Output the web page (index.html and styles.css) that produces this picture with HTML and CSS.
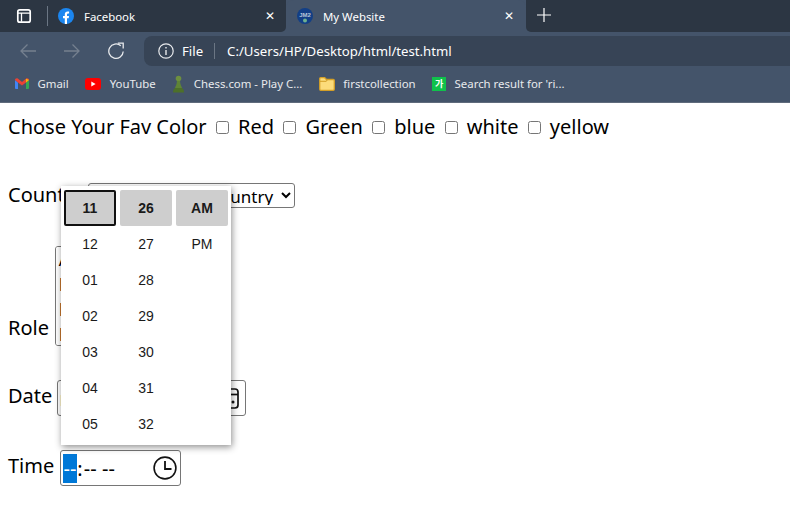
FILE: index.html
```html
<!DOCTYPE html>
<html lang="en">
<head>
    <meta charset="UTF-8">
    <meta name="viewport" content="width=device-width, initial-scale=1.0">
    <title>My Website</title>
    <link rel="stylesheet" href="styles.css">
</head>
<body>

<header class="browser">
    <div class="tabs">
        <div class="tabs-left">
            <svg class="side-icon" width="16" height="16" viewBox="0 0 16 16"><rect x="1.800" y="1.800" width="12.400" height="12.400" rx="2" fill="none" stroke="#fff" stroke-width="1.700"/><path d="M2 5.200h12M5.500 5.200v8.500" stroke="#fff" stroke-width="1.300" fill="none"/></svg>
            <span class="tab-sep"></span>
            <div class="tab tab-fb">
                <svg width="16" height="16" viewBox="0 0 16 16"><circle cx="8" cy="8" r="8" fill="#1b86f0"/><path d="M6.800 16V10.300H5V8h1.800V6.300C6.800 4.400 7.900 3.400 9.600 3.400c.8 0 1.500.1 1.500.1v1.900h-.9c-.9 0-1.200.6-1.200 1.200V8h2l-.3 2.300H9V16z" fill="#fff"/></svg>
                <span class="tab-title">Facebook</span>
                <span class="tab-close">&#10005;</span>
            </div>
        </div>
        <div class="tab tab-active">
            <svg width="16" height="16" viewBox="0 0 16 16"><circle cx="8" cy="8" r="8" fill="#123f86"/><text x="8" y="8.500" text-anchor="middle" class="jm-text">JM2</text><circle cx="8" cy="12.500" r="2" fill="#6fb08f"/></svg>
            <span class="tab-title">My Website</span>
            <span class="tab-close">&#10005;</span>
        </div>
        <div class="tabs-right">
            <svg width="14" height="14" viewBox="0 0 14 14"><path d="M7 0v14M0 7h14" stroke="#fff" stroke-width="1.200"/></svg>
        </div>
    </div>

    <div class="toolbar">
        <div class="nav-btns">
            <svg width="16" height="16" viewBox="0 0 16 16"><path d="M16 8H1M7.500 1.500 1 8l6.500 6.500" fill="none" stroke="#75808f" stroke-width="1.300"/></svg>
            <svg width="16" height="16" viewBox="0 0 16 16"><path d="M0 8h15M8.500 1.500 15 8l-6.500 6.500" fill="none" stroke="#75808f" stroke-width="1.300"/></svg>
            <svg width="16" height="18" viewBox="0 0 16 18"><path d="M15.200 9.500A7.200 7.200 0 1 1 12.800 3.800" fill="none" stroke="#e8eaed" stroke-width="1.300"/><path d="M9.800 1.200h5.400v5.300" fill="none" stroke="#e8eaed" stroke-width="1.300"/></svg>
        </div>
        <div class="omnibox">
            <svg width="16" height="16" viewBox="0 0 16 16"><circle cx="8" cy="8" r="7.200" fill="none" stroke="#e8eaed" stroke-width="1.200"/><path d="M8 7v5M8 4v1.600" stroke="#e8eaed" stroke-width="1.400"/></svg>
            <span class="omni-file">File</span>
            <span class="omni-sep"></span>
            <span class="omni-url">C:/Users/HP/Desktop/html/test.html</span>
        </div>
    </div>

    <nav class="bookmarks">
        <a class="bm">
            <svg width="14" height="11" viewBox="0 0 14 11"><path d="M0 2v8a1 1 0 0 0 1 1h2V4.500z" fill="#4285f4"/><path d="M14 2v8a1 1 0 0 1-1 1h-2V4.500z" fill="#34a853"/><path d="M0 2C0 .5 1.500-.4 2.800.5L7 4l4.200-3.500C12.500-.4 14 .5 14 2l-3 2.500L7 7.600 3 4.500z" fill="#ea4335"/><path d="M11 .7l3 1.300-3 2.500z" fill="#fbbc04"/></svg>
            Gmail
        </a>
        <a class="bm">
            <svg width="16" height="12" viewBox="0 0 16 12"><rect width="16" height="12" rx="3" fill="#f00"/><path d="M6.300 3.500v5L10.600 6z" fill="#fff"/></svg>
            YouTube
        </a>
        <a class="bm">
            <svg width="13" height="18" viewBox="0 0 12 18"><circle cx="6" cy="3.500" r="2.800" fill="#6d8f3f"/><path d="M4.500 6h3c0 3 1.500 5 2 7H2.500c.5-2 2-4 2-7z" fill="#5f8436"/><path d="M.5 17.500c0-2.500 1-3.800 2-4.500h7c1 .7 2 2 2 4.500z" fill="#4d7029"/></svg>
            Chess.com - Play C...
        </a>
        <a class="bm">
            <svg width="16" height="14" viewBox="0 0 16 14"><path d="M.7 12V1.700C.7 1 1.100.7 1.700.7h4L7.500 2.500h6.800c.6 0 1 .4 1 1V12c0 .7-.4 1.300-1 1.300H1.700c-.6 0-1-.6-1-1.300z" fill="#fcdc7b" stroke="#d39f27" stroke-width="1.300"/><path d="M1 4.300h6.300l1-1.500" fill="none" stroke="#d39f27"/></svg>
            firstcollection
        </a>
        <a class="bm">
            <span class="bm-green">가</span>
            Search result for 'ri...
        </a>
    </nav>
</header>

<main class="page">
    <p class="row">
        Chose Your Fav Color
        <input class="check" type="checkbox"> Red
        <input class="check" type="checkbox"> Green
        <input class="check" type="checkbox"> blue
        <input class="check" type="checkbox"> white
        <input class="check" type="checkbox"> yellow
    </p>
    <p class="row row-country">
        Country
        <select class="field country-select">
            <option>Choose Your Country</option>
        </select>
    </p>
    <p class="row row-role">
        Role
        <select class="field role-list" size="4">
            <option>Admin</option>
            <option>Manager</option>
            <option>Developer</option>
            <option>Engineer</option>
        </select>
    </p>
    <p class="row row-date">
        Date
        <span class="field-wrap date-wrap">
            <input class="field date-input" type="date">
            <svg class="field-icon" width="24" height="24" viewBox="0 0 24 24"><rect x="3" y="3" width="18" height="19" rx="3" fill="none" stroke="#111" stroke-width="1.700"/><path d="M3 8.500h18" stroke="#111" stroke-width="1.700"/><circle cx="16" cy="16" r="1.500" fill="#111"/></svg>
        </span>
    </p>
    <p class="row row-time">
        Time
        <span class="field-wrap time-wrap">
            <input class="field time-input" type="time">
            <svg class="field-icon" width="24" height="24" viewBox="0 0 24 24"><circle cx="12" cy="12" r="10.900" fill="none" stroke="#111" stroke-width="1.600"/><path d="M12 5v8h6.500" fill="none" stroke="#111" stroke-width="1.800"/></svg>
        </span>
    </p>

    <!-- time picker dropdown, open over the form -->
    <div class="picker">
        <span class="cell cell-current cell-focus">11</span>
        <span class="cell cell-current">26</span>
        <span class="cell cell-current">AM</span>
        <span class="cell">12</span>
        <span class="cell">27</span>
        <span class="cell">PM</span>
        <span class="cell">01</span>
        <span class="cell">28</span>
        <span class="cell"></span>
        <span class="cell">02</span>
        <span class="cell">29</span>
        <span class="cell"></span>
        <span class="cell">03</span>
        <span class="cell">30</span>
        <span class="cell"></span>
        <span class="cell">04</span>
        <span class="cell">31</span>
        <span class="cell"></span>
        <span class="cell">05</span>
        <span class="cell">32</span>
        <span class="cell"></span>
    </div>
</main>

</body>
</html>
```
FILE: styles.css
```css
body {
    font-family: "Noto Sans", sans-serif;
    margin: 0;
    padding: 0;
    background-color: #fff;
    color: #000;
    overflow: hidden;
}

/* browser chrome */
.browser {
    background-color: #44546a;
    color: #fff;
    font-size: 11.400px;
    height: 103px;
    border-bottom: 1px solid #5f6b7c;
    box-sizing: border-box;
}

.tabs {
    display: flex;
    height: 36px;
    align-items: flex-start;
}

.tabs-left {
    width: 286px;
    height: 32px;
    background-color: #2c3643;
    border-bottom-right-radius: 5px;
    display: flex;
    align-items: center;
    padding-left: 16px;
    box-sizing: border-box;
}

.side-icon {
    flex: none;
}

.tab-sep {
    width: 1px;
    height: 20px;
    margin-left: 15px;
    background-color: #6b7684;
}

.tab {
    display: flex;
    align-items: center;
}

.tab-fb {
    margin-left: 10px;
    flex: 1;
    padding-right: 9px;
}

.tab-active {
    width: 240px;
    height: 32px;
    background-color: #44546a;
    border-radius: 8px 8px 0 0;
    padding: 0 10px 0 11px;
    box-sizing: border-box;
}

.tab-title {
    margin-left: 10px;
    flex: 1;
}

.tab-close {
    font-size: 12px;
    font-family: "DejaVu Sans", sans-serif;
    width: 12px;
}

.jm-text {
    font-family: "Liberation Sans", sans-serif;
    font-size: 6px;
    font-weight: bold;
    fill: #b9c6d8;
}

.tabs-right {
    flex: 1;
    height: 32px;
    background-color: #2c3643;
    border-bottom-left-radius: 5px;
    display: flex;
    align-items: center;
    padding-left: 11px;
    padding-bottom: 2px;
    box-sizing: border-box;
}

.toolbar {
    display: flex;
    height: 30px;
    align-items: center;
}

.nav-btns {
    width: 144px;
    display: flex;
    align-items: center;
    gap: 28px;
    padding-left: 20px;
    box-sizing: border-box;
}

.omnibox {
    flex: 1;
    height: 30px;
    background-color: #374456;
    border-radius: 8px 0 0 8px;
    display: flex;
    align-items: center;
    padding-left: 14px;
    font-size: 13.200px;
}

.omni-file {
    margin-left: 8px;
}

.omni-sep {
    width: 1px;
    height: 16px;
    margin: 0 12px 0 11px;
    background-color: #6b7684;
}

.bookmarks {
    display: flex;
    height: 35px;
    align-items: center;
    padding-left: 15px;
    gap: 16.500px;
    color: #e8eaed;
}

.bm {
    display: flex;
    align-items: center;
    gap: 8.500px;
}

.bm-green {
    width: 14px;
    height: 14px;
    background-color: #0fc24b;
    color: #fff;
    font: bold 9px "Noto Sans CJK KR", sans-serif;
    text-align: center;
    line-height: 14px;
}

/* form */
.page {
    position: relative;
    padding: 10px 8px 0;
    font-size: 20px;
}

.row {
    margin: 0;
}

.check {
    margin-right: 4px;
}

.row-country {
    margin-top: 41px;
}

.row-role {
    margin-top: 38px;
}

.row-date {
    margin-top: 34px;
}

.row-time {
    margin-top: 34px;
}

.field {
    font-family: "Noto Sans", sans-serif;
    font-size: 20px;
    box-sizing: border-box;
    border: 1px solid #767676;
    border-radius: 3px;
    background-color: #fff;
}

.country-select {
    font-size: 17px;
    width: 207px;
    height: 25px;
    padding: 0 0 2px 11px;
    vertical-align: -1px;
}

.role-list {
    font-size: 18px;
    height: 100px;
    width: 120px;
    margin-left: 1px;
    padding-left: 0.5px;
    vertical-align: -11px;
}

.field-wrap {
    position: relative;
    display: inline-block;
    vertical-align: -3px;
}

/* native pickers are hidden, the drawn icon lies over the input */
.field-icon {
    position: absolute;
    top: 6px;
}

.date-wrap {
    margin-left: -1px;
}

.date-wrap .field-icon {
    right: 5px;
}

.time-wrap {
    margin-left: 1px;
}

.time-wrap .field-icon {
    right: 4px;
}

.date-input {
    width: 189px;
    height: 36px;
}

.time-input {
    width: 121px;
    height: 36px;
    outline: none;
}

.date-input::-webkit-calendar-picker-indicator,
.time-input::-webkit-calendar-picker-indicator {
    opacity: 0;
}

.time-input::-webkit-datetime-edit-hour-field {
    background-color: #0078d7;
    color: #fff;
    padding: 3px 1px 3px 0;
    margin-left: 1px;
}

.picker {
    position: absolute;
    left: 61px;
    top: 83px;
    width: 170px;
    height: 259px;
    box-sizing: border-box;
    padding: 4px 3px;
    background-color: #fff;
    box-shadow: 1px 2px 7px rgba(0, 0, 0, 0.45);
    display: grid;
    grid-template-columns: repeat(3, 52px);
    grid-auto-rows: 36px;
    column-gap: 4px;
    color: #1a1a1a;
    font-family: "Liberation Sans", sans-serif;
    font-size: 14px;
}

.cell {
    display: flex;
    align-items: center;
    justify-content: center;
    border-radius: 2px;
}

.cell-current {
    background-color: #cecece;
    font-weight: bold;
}

.cell-focus {
    border: 2px solid #111;
    box-sizing: border-box;
}
```
